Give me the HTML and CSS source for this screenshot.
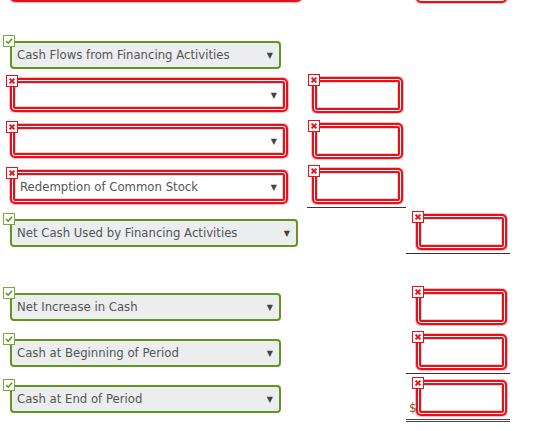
FILE: index.html
```html
<!DOCTYPE html>
<html lang="en">
<head>
<meta charset="UTF-8">
<meta name="viewport" content="width=device-width, initial-scale=1.0">
<title>Statement of Cash Flows</title>
<link rel="stylesheet" href="styles.css">
</head>
<body>

<div class="sheet">

  <!-- last row of the operating section -->
  <div class="row">
    <div class="cell-label">
      <div class="dropdown wrong wide"></div>
    </div>
    <div class="cell-amount"></div>
    <div class="cell-total">
      <div class="amount wrong"></div>
    </div>
  </div>

  <div class="spacer"></div>

  <!-- Financing section -->
  <div class="row head">
    <div class="cell-label">
      <div class="dropdown right">
        <span class="badge ok"><svg viewBox="0 0 10 10"><path d="M2 5.2 L4.2 7.2 L8 2.8"/></svg></span>
        <span class="text">Cash Flows from Financing Activities</span><span class="arrow">&#9660;</span>
      </div>
    </div>
    <div class="cell-amount"></div>
    <div class="cell-total"></div>
  </div>

  <div class="row">
    <div class="cell-label">
      <div class="dropdown wrong">
        <span class="badge bad"><svg viewBox="0 0 10 10"><path d="M2.6 2.6 L7.4 7.4 M7.4 2.6 L2.6 7.4"/></svg></span>
        <span class="text"></span><span class="arrow">&#9660;</span>
      </div>
    </div>
    <div class="cell-amount">
      <div class="amount wrong">
        <span class="badge bad"><svg viewBox="0 0 10 10"><path d="M2.6 2.6 L7.4 7.4 M7.4 2.6 L2.6 7.4"/></svg></span>
      </div>
    </div>
    <div class="cell-total"></div>
  </div>

  <div class="row">
    <div class="cell-label">
      <div class="dropdown wrong">
        <span class="badge bad"><svg viewBox="0 0 10 10"><path d="M2.6 2.6 L7.4 7.4 M7.4 2.6 L2.6 7.4"/></svg></span>
        <span class="text"></span><span class="arrow">&#9660;</span>
      </div>
    </div>
    <div class="cell-amount">
      <div class="amount wrong">
        <span class="badge bad"><svg viewBox="0 0 10 10"><path d="M2.6 2.6 L7.4 7.4 M7.4 2.6 L2.6 7.4"/></svg></span>
      </div>
    </div>
    <div class="cell-total"></div>
  </div>

  <div class="row">
    <div class="cell-label">
      <div class="dropdown wrong">
        <span class="badge bad"><svg viewBox="0 0 10 10"><path d="M2.6 2.6 L7.4 7.4 M7.4 2.6 L2.6 7.4"/></svg></span>
        <span class="text">Redemption of Common Stock</span><span class="arrow">&#9660;</span>
      </div>
    </div>
    <div class="cell-amount underline">
      <div class="amount wrong">
        <span class="badge bad"><svg viewBox="0 0 10 10"><path d="M2.6 2.6 L7.4 7.4 M7.4 2.6 L2.6 7.4"/></svg></span>
      </div>
    </div>
    <div class="cell-total"></div>
  </div>

  <div class="row">
    <div class="cell-label">
      <div class="dropdown right long">
        <span class="badge ok"><svg viewBox="0 0 10 10"><path d="M2 5.2 L4.2 7.2 L8 2.8"/></svg></span>
        <span class="text">Net Cash Used by Financing Activities</span><span class="arrow">&#9660;</span>
      </div>
    </div>
    <div class="cell-amount"></div>
    <div class="cell-total underline">
      <div class="amount wrong">
        <span class="badge bad"><svg viewBox="0 0 10 10"><path d="M2.6 2.6 L7.4 7.4 M7.4 2.6 L2.6 7.4"/></svg></span>
      </div>
    </div>
  </div>

  <div class="spacer wide-gap"></div>

  <!-- Totals -->
  <div class="row">
    <div class="cell-label">
      <div class="dropdown right">
        <span class="badge ok"><svg viewBox="0 0 10 10"><path d="M2 5.2 L4.2 7.2 L8 2.8"/></svg></span>
        <span class="text">Net Increase in Cash</span><span class="arrow">&#9660;</span>
      </div>
    </div>
    <div class="cell-amount"></div>
    <div class="cell-total">
      <div class="amount wrong">
        <span class="badge bad"><svg viewBox="0 0 10 10"><path d="M2.6 2.6 L7.4 7.4 M7.4 2.6 L2.6 7.4"/></svg></span>
      </div>
    </div>
  </div>

  <div class="row">
    <div class="cell-label">
      <div class="dropdown right">
        <span class="badge ok"><svg viewBox="0 0 10 10"><path d="M2 5.2 L4.2 7.2 L8 2.8"/></svg></span>
        <span class="text">Cash at Beginning of Period</span><span class="arrow">&#9660;</span>
      </div>
    </div>
    <div class="cell-amount"></div>
    <div class="cell-total underline">
      <div class="amount wrong">
        <span class="badge bad"><svg viewBox="0 0 10 10"><path d="M2.6 2.6 L7.4 7.4 M7.4 2.6 L2.6 7.4"/></svg></span>
      </div>
    </div>
  </div>

  <div class="row">
    <div class="cell-label">
      <div class="dropdown right">
        <span class="badge ok"><svg viewBox="0 0 10 10"><path d="M2 5.2 L4.2 7.2 L8 2.8"/></svg></span>
        <span class="text">Cash at End of Period</span><span class="arrow">&#9660;</span>
      </div>
    </div>
    <div class="cell-amount"></div>
    <div class="cell-total double-underline">
      <span class="dollar">$</span>
      <div class="amount wrong">
        <span class="badge bad"><svg viewBox="0 0 10 10"><path d="M2.6 2.6 L7.4 7.4 M7.4 2.6 L2.6 7.4"/></svg></span>
      </div>
    </div>
  </div>

</div>

</body>
</html>
```

FILE: styles.css
```css
body {
  margin: 0;
  font-family: "DejaVu Sans", Verdana, sans-serif;
  font-size: 11.7px;
  color: #555;
  background: #fff;
}
.sheet {
  margin-top: -38px; /* page is scrolled a little */
}
.row {
  display: grid;
  grid-template-columns: 307px 99px 104px;
  align-items: center;
  height: 46px;
}
.row.head {
  height: 38px;
  align-items: end;
}
.row.head .dropdown {
  margin-bottom: 3px;
}
.spacer {
  height: 26px;
}
.spacer.wide-gap {
  height: 28px;
}

/* columns */
.cell-label {
  padding-left: 10px;
}
.cell-amount {
  padding-left: 5px;
}
.cell-total {
  padding-left: 10px;
}
.underline,
.double-underline {
  align-self: stretch;
  display: flex;
  align-items: flex-end;
  padding-bottom: 3px;
  border-bottom: 1px solid #333;
  margin-bottom: 2px;
}
.double-underline {
  border-bottom: 3px double #444;
  padding-left: 3px;
  margin-bottom: 0;
}
.dollar {
  width: 7px;
  font-size: 12px;
  line-height: 13px;
  color: #7d5c1e;
  margin-bottom: 1px;
}

/* dropdowns */
.dropdown {
  position: relative;
  display: flex;
  justify-content: space-between;
  align-items: center;
  box-sizing: border-box;
  width: 271px;
  height: 28px;
  padding: 0 6px 0 5px;
  border: 2px solid #62961f;
  border-radius: 4px;
  background: #ebedef;
}
.dropdown.long {
  width: 288px;
}
.dropdown.wrong {
  width: 278px;
  height: 34px;
  padding: 0 9px 0 8px;
  border-color: #e8101a;
  border-radius: 5px;
  background: #fff;
  box-shadow: inset 0 0 0 1px #fff, inset 0 0 0 3px #e8101a, inset 0 0 0 4px #d6d6d6, 0 0 0 1px rgba(232, 16, 26, .3);
}
.dropdown.wrong.wide {
  width: 292px;
}
.arrow {
  font-size: 8px;
  color: #444;
}

/* amount boxes */
.amount {
  position: relative;
  box-sizing: border-box;
  width: 91px;
  height: 36px;
  background: #fff;
}
.amount.wrong {
  border: 2px solid #e8101a;
  border-radius: 5px;
  box-shadow: inset 0 0 0 1px #fff, inset 0 0 0 3px #e8101a, inset 0 0 0 4px #d6d6d6, 0 0 0 1px rgba(232, 16, 26, .3);
}

/* check / cross markers */
.badge {
  position: absolute;
  box-sizing: border-box;
  width: 12px;
  height: 12px;
  background: #fff;
  display: flex;
}
.badge svg {
  width: 10px;
  height: 10px;
  fill: none;
}
.badge.ok {
  left: -9px;
  top: -8px;
  border: 1px solid #7aab3a;
}
.badge.ok path {
  stroke: #62961f;
  stroke-width: 1.6;
}
.badge.bad {
  left: -6px;
  top: -5px;
  border: 1px solid #e8101a;
}
.badge.bad path {
  stroke: #e8101a;
  stroke-width: 2;
}
```
